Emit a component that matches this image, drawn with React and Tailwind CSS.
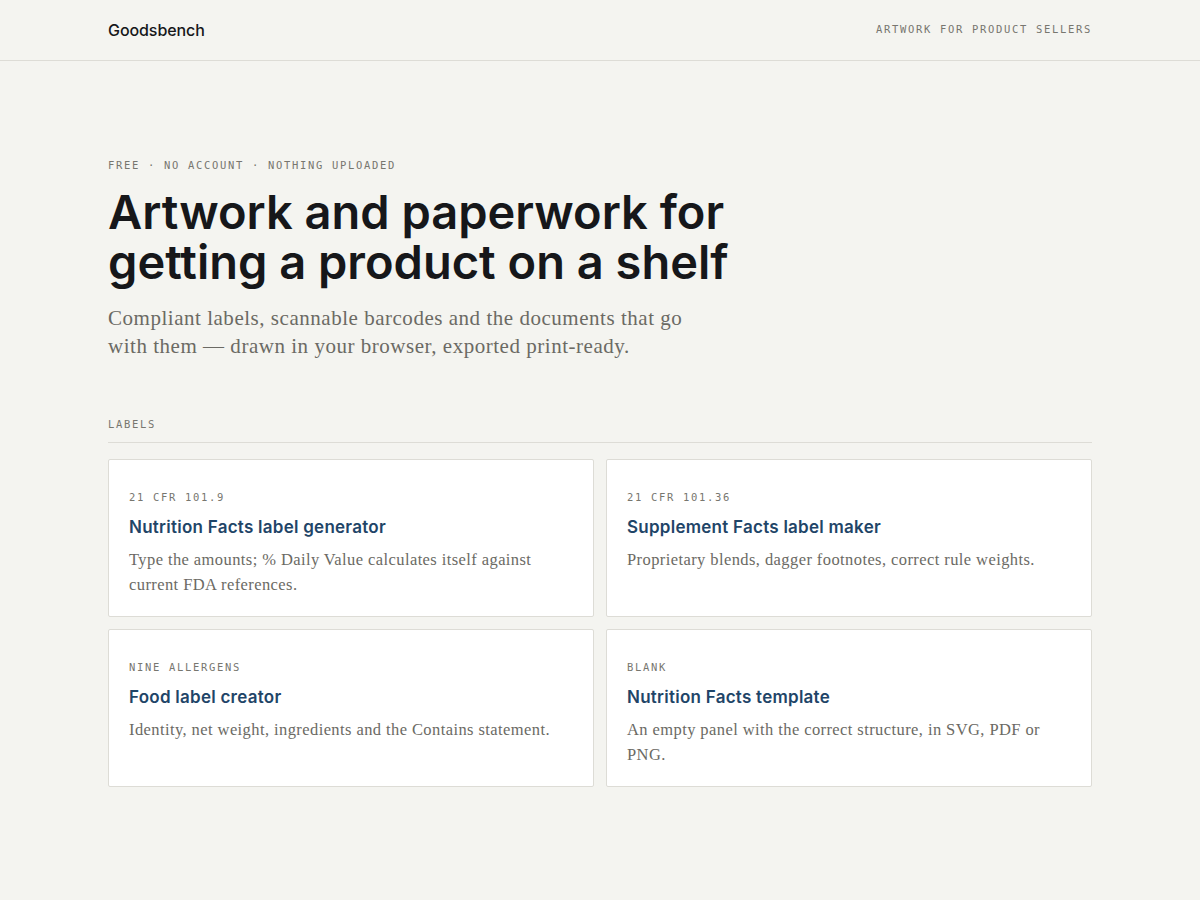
import React from 'react';

const CARDS = [
  {
    code: '21 CFR 101.9',
    title: 'Nutrition Facts label generator',
    text: 'Type the amounts; % Daily Value calculates itself against current FDA references.',
  },
  {
    code: '21 CFR 101.36',
    title: 'Supplement Facts label maker',
    text: 'Proprietary blends, dagger footnotes, correct rule weights.',
  },
  {
    code: 'NINE ALLERGENS',
    title: 'Food label creator',
    text: 'Identity, net weight, ingredients and the Contains statement.',
  },
  {
    code: 'BLANK',
    title: 'Nutrition Facts template',
    text: 'An empty panel with the correct structure, in SVG, PDF or PNG.',
  },
];

function Card({ code, title, text }) {
  return (
    <a href="#" className="block bg-white border border-[#dddcd6] rounded-[2px] px-5 pt-[28px] pb-[19px]">
      <div className="font-['DejaVu_Sans_Mono',monospace] text-[10.5px] leading-[18px] tracking-[0.16em] text-[#77766f] uppercase">
        {code}
      </div>
      <h3 className="mt-[9px] font-['Inter',sans-serif] text-[17px] leading-[24px] font-semibold text-[#1f4568] tracking-[0.015em]">
        {title}
      </h3>
      <p className="mt-[9px] font-['Liberation_Serif',serif] text-[16.5px] leading-[24.5px] tracking-[0.025em] text-[#6b6a64]">
        {text}
      </p>
    </a>
  );
}

export default function App() {
  return (
    <div className="min-h-screen bg-[#f4f4f0] text-[#16171a]">
      {/* Top bar */}
      <header className="border-b border-[#dddcd6]">
        <div className="max-w-[984px] mx-auto h-[60px] flex items-center justify-between">
          <span className="font-['Inter',sans-serif] text-[16px] font-medium tracking-[-0.005em] text-[#16171a]">
            Goodsbench
          </span>
          <span className="font-['DejaVu_Sans_Mono',monospace] text-[10.5px] tracking-[0.16em] text-[#77766f]">
            ARTWORK FOR PRODUCT SELLERS
          </span>
        </div>
      </header>

      <main className="max-w-[984px] mx-auto">
        {/* Hero */}
        <section className="pt-[96px]">
          <div className="font-['DejaVu_Sans_Mono',monospace] text-[10.5px] leading-[16px] tracking-[0.16em] text-[#77766f]">
            FREE · NO ACCOUNT · NOTHING UPLOADED
          </div>
          <h1 className="mt-[14px] font-['Inter',sans-serif] text-[47px] leading-[50px] font-semibold tracking-normal text-[#16171a] max-w-[660px]">
            Artwork and paperwork for getting a product on a shelf
          </h1>
          <p className="mt-[17px] font-['Liberation_Serif',serif] text-[21px] leading-[28px] tracking-[0.025em] text-[#6b6a64] max-w-[600px]">
            Compliant labels, scannable barcodes and the documents that go with them — drawn in your browser, exported print-ready.
          </p>
        </section>

        {/* Labels */}
        <section className="mt-[56px]">
          <div className="pb-[10px] border-b border-[#dddcd6] font-['DejaVu_Sans_Mono',monospace] text-[10.5px] leading-[16px] tracking-[0.16em] text-[#77766f]">
            LABELS
          </div>
          <div className="mt-[16px] grid grid-cols-2 gap-[12px]">
            {CARDS.map((c) => (
              <Card key={c.title} {...c} />
            ))}
          </div>
        </section>
      </main>
    </div>
  );
}
